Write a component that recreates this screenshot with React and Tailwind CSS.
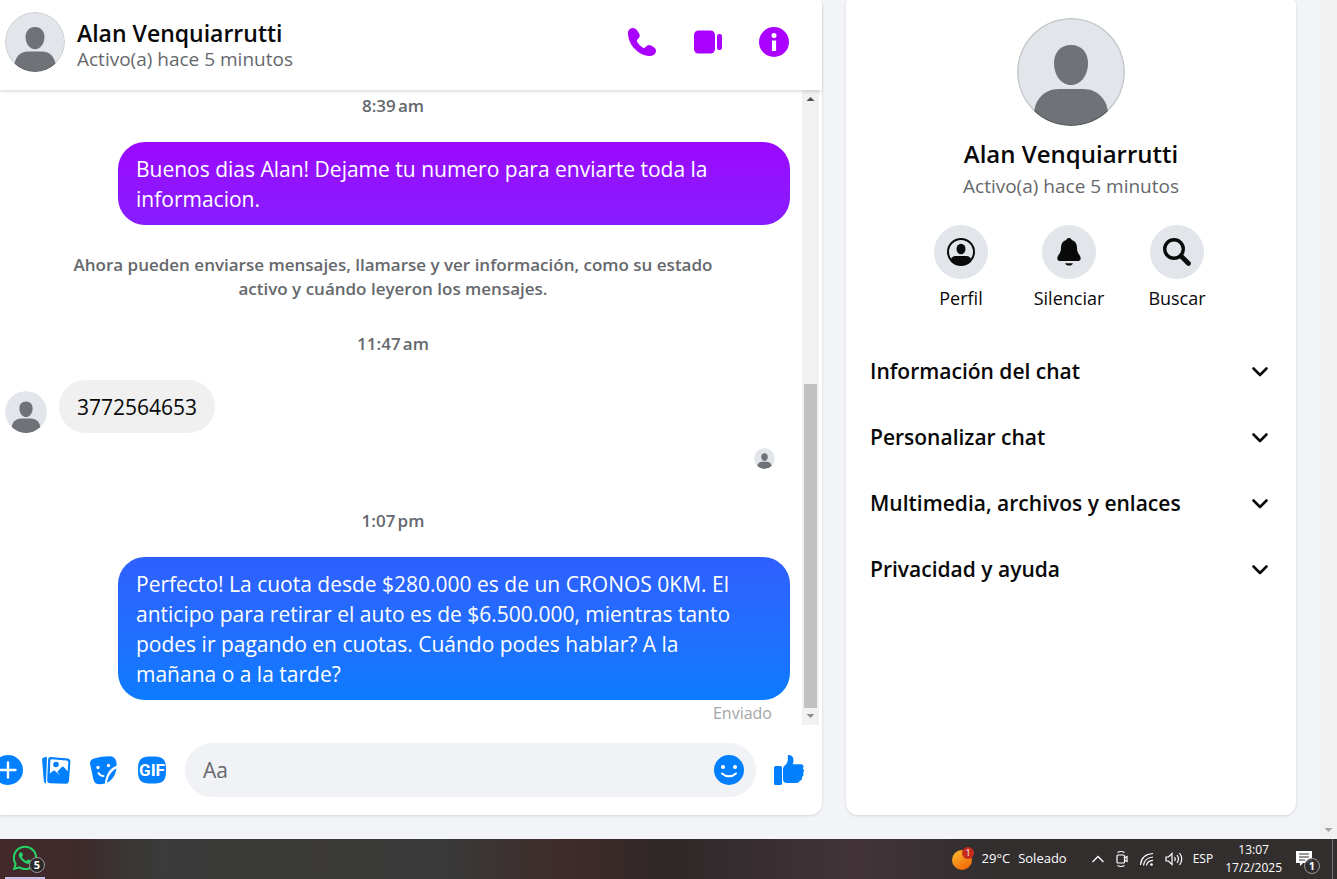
import React, { useState } from "react";
import { FaWhatsapp } from "react-icons/fa";

const SECTIONS = [
  "Información del chat",
  "Personalizar chat",
  "Multimedia, archivos y enlaces",
  "Privacidad y ayuda",
];

const Avatar = ({ className, ring }) => (
  <svg viewBox="0 0 108 108" className={`shrink-0 rounded-full ${className}`} aria-hidden="true">
    <clipPath id="avatar-clip">
      <circle cx="54" cy="54" r="54" />
    </clipPath>
    <g clipPath="url(#avatar-clip)">
      <rect width="108" height="108" fill="#e2e5e9" />
      <path d="M54 27c11 0 17 8 17 18 0 12-7 22-17 22s-17-10-17-22c0-10 6-18 17-18z" fill="#6f7276" />
      <path d="M42 71h24c15 0 25 11 25 26v11H17V97c0-15 10-26 25-26z" fill="#6f7276" />
    </g>
    {ring && <circle cx="54" cy="54" r="53.2" fill="none" stroke="#000" strokeOpacity="0.13" strokeWidth="1.5" />}
  </svg>
);

const PhoneIcon = () => (
  <svg viewBox="0 0 30 30" className="size-[30px]" fill="#aa00ff">
    <path d="M6 1C3 1 1 3.200 1 6.200 1 18 12 29 23.300 29c3 0 5.700-2.200 5.700-5.200 0-1.600-.8-2.700-2.200-3.600l-2.300-1.400c-1.800-1.100-3.700-.9-5.100.4l-1.500 1.400c-.6.5-1.100.5-1.800.1-2.600-1.600-4.800-3.800-6.100-6.300-.3-.7-.3-1.200.2-1.700l1.400-1.400c1.300-1.400 1.500-3.300.4-5.100L10.200 3.400C9.200 1.900 7.800 1 6 1z" />
  </svg>
);

const VideoIcon = () => (
  <svg viewBox="0 0 30 30" className="size-[30px]" fill="#aa00ff">
    <rect x="1" y="3.500" width="21" height="23" rx="4.500" />
    <rect x="24" y="7" width="5" height="16" rx="2.200" />
  </svg>
);

const InfoIcon = () => (
  <svg viewBox="0 0 30 30" className="size-[30px]">
    <circle cx="15" cy="15" r="15" fill="#aa00ff" />
    <circle cx="15" cy="8.400" r="2.500" fill="#fff" />
    <path d="M13 13.500h4.100V24H13z" fill="#fff" />
  </svg>
);

const PlusIcon = () => (
  <svg viewBox="0 0 30 30" className="size-[30px]">
    <circle cx="15" cy="15" r="15" fill="#0080ff" />
    <path d="M15 7.500v15M7.500 15h15" stroke="#fff" strokeWidth="2.400" strokeLinecap="round" />
  </svg>
);

const PhotosIcon = () => (
  <svg viewBox="0 0 30 30" className="size-[30px]">
    <path d="M1 4.500Q1 2.800 3 2.500l3-.7L5 28.500Q3 28 2.900 26z" fill="#0080ff" />
    <path d="M9.500 2l17 1.400q3 .3 2.900 3.200l-1.400 19q-.2 3.200-3 3.100L9 28.200q-3-.2-2.800-3L7.100 4.500Q7.300 1.900 9.500 2z" fill="#0080ff" />
    <path d="M10.500 4.200l14.800 1.200q2.200.2 2 2.400l-.6 8.500-4-4.400q-.9-1-1.900 0l-4.500 4.900 2.700 3.600-4.800-4.500q-1-.9-2-.1l-3.400 2.600.5-11.800q.1-2.500 1.200-2.400z" fill="#fff" />
    <circle cx="15" cy="9.500" r="2.800" fill="#0080ff" />
  </svg>
);

const StickerIcon = () => (
  <svg viewBox="0 0 30 30" className="size-[30px]">
    <path d="M5 3.500q8-2.500 16-2.300 4.500.2 6 4.300.9 2.700.4 5.500c-5.500 1.500-10.500 7.500-11.500 17.500q-4 1-7.500.5-3-.7-3.900-4L1.200 9.500Q.4 4.900 5 3.500z" fill="#0080ff" />
    <path d="M27.500 13.500c-.9 6-4 11.500-9.500 14.300.8-6.500 4.300-11.800 9.500-14.300z" fill="#0080ff" />
    <circle cx="9" cy="12.500" r="1.700" fill="#fff" />
    <circle cx="19.500" cy="10.500" r="1.700" fill="#fff" />
    <path d="M9.500 18c1.200 2.300 2.800 3 5 3" fill="none" stroke="#fff" strokeWidth="1.800" strokeLinecap="round" />
  </svg>
);

const GifIcon = () => (
  <svg viewBox="0 0 30 30" className="size-[30px]">
    <path d="M15 1.500c11 0 14 2 14 13.500s-3 13.500-14 13.500S1 26.500 1 15 4 1.500 15 1.500z" fill="#0080ff" />
    <text x="15" y="21" textAnchor="middle" fontSize="17" fontWeight="700" fill="#fff" className="font-[Roboto,sans-serif]">
      GIF
    </text>
  </svg>
);

const SmileIcon = () => (
  <svg viewBox="0 0 30 30" className="size-[30px]">
    <circle cx="15" cy="15" r="15" fill="#0080ff" />
    <circle cx="9" cy="12" r="2" fill="#fff" />
    <circle cx="21" cy="12" r="2" fill="#fff" />
    <path d="M8 18.500c4 3.700 10 3.700 14 0" fill="none" stroke="#fff" strokeWidth="2" strokeLinecap="round" />
  </svg>
);

const LikeIcon = () => (
  <svg viewBox="0 0 30 30" className="size-[30px]" fill="#0080ff">
    <rect y="11" width="8" height="19" rx="1.500" />
    <path d="M14.500 0c3.500 0 5 2.500 5 5 0 1.800-.4 3.300-.9 4.300H27c2.500 0 3.200 2.500 1.800 4 1.600 1.300 1.500 3.500.2 4.500 1 1.700.4 3.400-1 4.300.5 1.900-.8 3.400-2.400 3.700-.3 1.500-1.600 2.200-3.100 2.200H13c-2.500 0-4-1.500-4-4v-9.500c0-1.800.6-2.800 1.800-3.900 2-1.800 3.100-3.600 3-6.600V1c0-.6.300-1 .7-1z" />
  </svg>
);

const ProfileIcon = () => (
  <svg viewBox="0 0 28 28" className="size-7">
    <clipPath id="profile-clip">
      <circle cx="14" cy="14" r="13" />
    </clipPath>
    <circle cx="14" cy="14" r="13" fill="none" stroke="#0a0a0a" strokeWidth="2" />
    <ellipse cx="14" cy="11" rx="4.500" ry="5.200" fill="#0a0a0a" />
    <path clipPath="url(#profile-clip)" d="M4 28v-6c0-3 2.500-4 5-4h10c2.500 0 5 1 5 4v6z" fill="#0a0a0a" />
  </svg>
);

const BellIcon = () => (
  <svg viewBox="0 0 28 28" className="size-7" fill="#0a0a0a">
    <path d="M14 0c1.500 0 2.500.8 2.700 2 3.600 1 5.300 4 5.300 7.500 0 3.700.8 5.300 2.500 7.500.8 1 1.200 2.200 1.200 3.500 0 1.500-1 2.500-2.500 2.500H4.800c-1.500 0-2.500-1-2.500-2.500 0-1.300.4-2.500 1.200-3.500C5.200 14.800 6 13.200 6 9.500 6 6 7.700 3 11.300 2c.2-1.200 1.200-2 2.700-2z" />
    <path d="M10 25.200h8c-.7 1.500-2 2.300-4 2.300s-3.300-.8-4-2.300z" />
  </svg>
);

const SearchIcon = () => (
  <svg viewBox="0 0 28 28" className="size-7" fill="none" stroke="#0a0a0a">
    <circle cx="11" cy="11" r="9.300" strokeWidth="3.400" />
    <path d="M18 18l7.500 7.500" strokeWidth="4.600" strokeLinecap="round" />
  </svg>
);

const ChevronDown = () => (
  <svg viewBox="0 0 18 12" className="h-3 w-[18px]" fill="none" stroke="#0a0a0a" strokeWidth="2.600" strokeLinecap="round" strokeLinejoin="round">
    <path d="M2.500 3.500L9 10l6.500-6.500" />
  </svg>
);

const ScrollArrow = ({ up, color }) => (
  <svg viewBox="0 0 17 17" className="size-[17px] shrink-0" fill={color}>
    <path d={up ? "M4.500 11h8L8.500 7z" : "M4.500 6h8l-4 4z"} />
  </svg>
);

const TimeLabel = ({ className, children }) => (
  <div className={`pr-1 text-center text-[17px] leading-6 font-semibold text-[#65686c] ${className}`}>{children}</div>
);

const Bubble = ({ className, children }) => (
  <p className={`rounded-[27px] px-[18px] pt-3 pb-[11px] text-[21px] leading-[30px] ${className}`}>{children}</p>
);

const ChatHeader = () => (
  <header className="z-10 flex items-center gap-3 rounded-tr-sm bg-white pt-3 pr-[33px] pb-[18px] pl-[5px] shadow-[0_2px_3px_rgba(0,0,0,0.12)]">
    <Avatar className="size-[60px]" ring />
    <div className="flex-1 pt-2">
      <h1 className="text-[23px] leading-6 font-semibold text-[#080809]">Alan Venquiarrutti</h1>
      <p className="mt-0.5 text-[19px] leading-6 text-[#65686c]">Activo(a) hace 5 minutos</p>
    </div>
    <div className="flex gap-9">
      <button type="button" aria-label="Llamar"><PhoneIcon /></button>
      <button type="button" aria-label="Videollamada"><VideoIcon /></button>
      <button type="button" aria-label="Información"><InfoIcon /></button>
    </div>
  </header>
);

const Messages = () => (
  <div className="flex min-h-0 flex-1 pr-[3px]">
    <div className="flex-1 overflow-hidden pt-1 pr-3">
      <TimeLabel>8:39{"\u202f"}am</TimeLabel>
      <Bubble className="mt-6 ml-auto max-w-[672px] bg-linear-to-b from-[#9b06ff] to-[#871cff] pr-8 text-white">
        Buenos dias Alan! Dejame tu numero para enviarte toda la informacion.
      </Bubble>
      <TimeLabel className="mx-auto mt-7 max-w-[664px]">
        Ahora pueden enviarse mensajes, llamarse y ver información, como su estado activo y cuándo leyeron los mensajes.
      </TimeLabel>
      <TimeLabel className="mt-[31px]">11:47{"\u202f"}am</TimeLabel>
      <div className="mt-6 flex items-end gap-3 pl-[5px]">
        <Avatar className="size-[42px]" />
        <Bubble className="bg-[#f0f0f0] text-[#080809]">3772564653</Bubble>
      </div>
      <div className="mt-[15px] flex justify-end pr-[15px]">
        <Avatar className="size-[21px]" />
      </div>
      <TimeLabel className="mt-10">1:07{"\u202f"}pm</TimeLabel>
      <Bubble className="mt-6 ml-auto max-w-[672px] bg-linear-to-b from-[#2e5fff] to-[#0a7bff] pr-8 text-white">
        Perfecto! La cuota desde $280.000 es de un CRONOS 0KM. El anticipo para retirar el auto es de $6.500.000,
        mientras tanto podes ir pagando en cuotas. Cuándo podes hablar? A la mañana o a la tarde?
      </Bubble>
      <p className="mt-px pr-[18px] text-right text-base leading-6 text-[#a4a6a9]">Enviado</p>
    </div>
    <div className="flex w-[17px] flex-col items-center bg-[#f1f1f1]">
      <ScrollArrow up color="#505050" />
      <div className="flex-1" />
      <div className="h-[51%] w-[13px] bg-[#c1c1c1]" />
      <ScrollArrow color="#8f8f8f" />
    </div>
  </div>
);

const Composer = () => {
  const [text, setText] = useState("");

  return (
    <form className="-ml-[7px] flex items-center gap-[18px] py-[18px] pr-[18px]" onSubmit={(e) => e.preventDefault()}>
      <button type="button" aria-label="Más acciones"><PlusIcon /></button>
      <button type="button" aria-label="Adjuntar foto"><PhotosIcon /></button>
      <button type="button" aria-label="Stickers"><StickerIcon /></button>
      <button type="button" aria-label="GIF"><GifIcon /></button>
      <div className="flex h-[54px] min-w-0 flex-1 items-center rounded-full bg-[#f0f2f5] pr-3 pl-[18px]">
        <input
          aria-label="Mensaje"
          placeholder="Aa"
          value={text}
          onChange={(e) => setText(e.target.value)}
          className="min-w-0 flex-1 bg-transparent text-[21px] leading-[30px] outline-none placeholder:text-[#65686c]"
        />
        <button type="button" aria-label="Emoji"><SmileIcon /></button>
      </div>
      <button type="button" aria-label="Me gusta"><LikeIcon /></button>
    </form>
  );
};

const QuickAction = ({ icon, label }) => (
  <button type="button" className="flex w-[108px] flex-col items-center gap-[7px]">
    <span className="flex size-[54px] items-center justify-center rounded-full bg-[#e2e5e9]">{icon}</span>
    <span className="text-[18px] leading-6 text-[#080809]">{label}</span>
  </button>
);

const DetailsPanel = () => (
  <aside className="w-[450px] shrink-0 rounded-t-sm rounded-b-xl bg-white pt-[18px] shadow-[0_1px_3px_rgba(0,0,0,0.12)]">
    <div className="flex flex-col items-center">
      <Avatar className="size-[108px]" ring />
      <h2 className="mt-3 text-2xl leading-8 font-semibold text-[#080809]">Alan Venquiarrutti</h2>
      <p className="mt-1 text-[19px] leading-6 text-[#65686c]">Activo(a) hace 5 minutos</p>
    </div>
    <div className="mt-[27px] flex justify-center pr-1">
      <QuickAction icon={<ProfileIcon />} label="Perfil" />
      <QuickAction icon={<BellIcon />} label="Silenciar" />
      <QuickAction icon={<SearchIcon />} label="Buscar" />
    </div>
    <div className="mt-7">
      {SECTIONS.map((title) => (
        <button key={title} type="button" className="flex h-[66px] w-full items-center justify-between pr-[27px] pl-6">
          <span className="text-[21px] leading-[30px] font-semibold text-[#080809]">{title}</span>
          <ChevronDown />
        </button>
      ))}
    </div>
  </aside>
);

const Taskbar = () => (
  <footer className="flex h-10 shrink-0 items-center bg-linear-[90deg,#43292b_0%,#3f2a2b_6%,#3a3534_9%,#3a3b3a_12%,#3b3a38_24%,#393a3a_33%,#3f2b29_43%,#2e2828_50%,#42343a_64%,#322e2e_74%,#322e2e_100%] text-xs text-white">
    <button type="button" aria-label="WhatsApp" className="relative ml-[5px] h-full w-10 border-b-2 border-[#c5bff0] pl-[6px]">
      <FaWhatsapp className="size-7 text-[#25d366]" />
      <span className="absolute top-[18px] right-0 flex size-4 items-center justify-center rounded-full border border-[#999] bg-[#2b2929] text-[11px] font-bold">
        5
      </span>
    </button>
    <div className="flex-1" />
    <button type="button" className="flex items-center text-[13px]">
      <svg viewBox="0 0 24 24" className="mr-[6px] size-6">
        <defs>
          <linearGradient id="sun" x1="0" y1="0" x2="0.6" y2="1">
            <stop offset="0" stopColor="#fbc02d" />
            <stop offset="1" stopColor="#f26a0a" />
          </linearGradient>
        </defs>
        <circle cx="10" cy="13" r="10" fill="url(#sun)" />
        <circle cx="16" cy="6" r="6" fill="#c42b1c" />
        <text x="16" y="9" textAnchor="middle" fontSize="9" fill="#fff">1</text>
      </svg>
      <span className="mr-2">29°C</span>
      <span>Soleado</span>
    </button>
    <div className="ml-6 flex items-center gap-[10px]">
      <svg viewBox="0 0 14 16" className="h-4 w-[14px]" fill="none" stroke="#fff" strokeWidth="1.300">
        <path d="M1.500 11L7 5.500l5.500 5.500" />
      </svg>
      <svg viewBox="0 0 14 18" className="h-[18px] w-[14px]" fill="none" stroke="#fff" strokeWidth="1.200">
        <rect x="2" y="5" width="7.500" height="8" rx="1" />
        <path d="M9.500 8l2.500-1.500v5L9.500 10M2.500 2.500q3.500-2 7 0M2.500 15.500q3.500 2 7 0" />
      </svg>
      <svg viewBox="0 0 16 16" className="size-4" fill="none" stroke="#fff" strokeWidth="1.200">
        <path d="M1.500 14C2 7 7 3 14 2.500M4.500 14.500C5 9.500 8.500 6.500 14 6M7.500 14.500C8 11.500 10.500 9.500 14 9.300" />
        <circle cx="12.500" cy="13.500" r="1.300" fill="#fff" stroke="none" />
      </svg>
      <svg viewBox="0 0 18 16" className="h-4 w-[18px]" fill="none" stroke="#fff" strokeWidth="1.200">
        <path d="M1 6v4h2.500l3.500 3.500v-11L3.500 6zM9.500 6q1.500 2 0 4M12 4q3 4 0 8M14.500 2q4.500 6 0 12" />
      </svg>
      <span>ESP</span>
    </div>
    <div className="ml-3 text-center leading-[18px]">
      <div>13:07</div>
      <div>17/2/2025</div>
    </div>
    <button type="button" aria-label="Notificaciones" className="relative mr-3 ml-[14px] h-full w-6">
      <svg viewBox="0 0 16 16" className="size-4" fill="#fff">
        <path d="M0 0h16v12H7l-3 3v-3H0z" />
        <path d="M3 3h10M3 6h10M3 9h6" stroke="#322e2e" />
      </svg>
      <span className="absolute top-[19px] right-0 flex size-4 items-center justify-center rounded-full border border-[#999] bg-[#322e2e]/90 text-[11px] font-bold">
        1
      </span>
    </button>
    <div className="mr-1 h-full w-px bg-[#777]" />
  </footer>
);

const App = () => {
  return (
    <div className="flex h-screen flex-col overflow-hidden bg-[#f2f4f7] font-['Open_Sans',sans-serif]">
      <div className="flex min-h-0 flex-1">
        <main className="flex min-w-0 flex-1 gap-6 pr-6 pb-6">
          <section className="flex min-w-0 flex-1 flex-col rounded-tr-sm rounded-br-xl bg-white shadow-[0_1px_3px_rgba(0,0,0,0.12)]">
            <ChatHeader />
            <Messages />
            <Composer />
          </section>
          <DetailsPanel />
        </main>
        <div className="flex w-[17px] flex-col justify-end bg-[#f1f1f1]">
          <ScrollArrow color="#a3a3a3" />
        </div>
      </div>
      <Taskbar />
    </div>
  );
};

export default App;
